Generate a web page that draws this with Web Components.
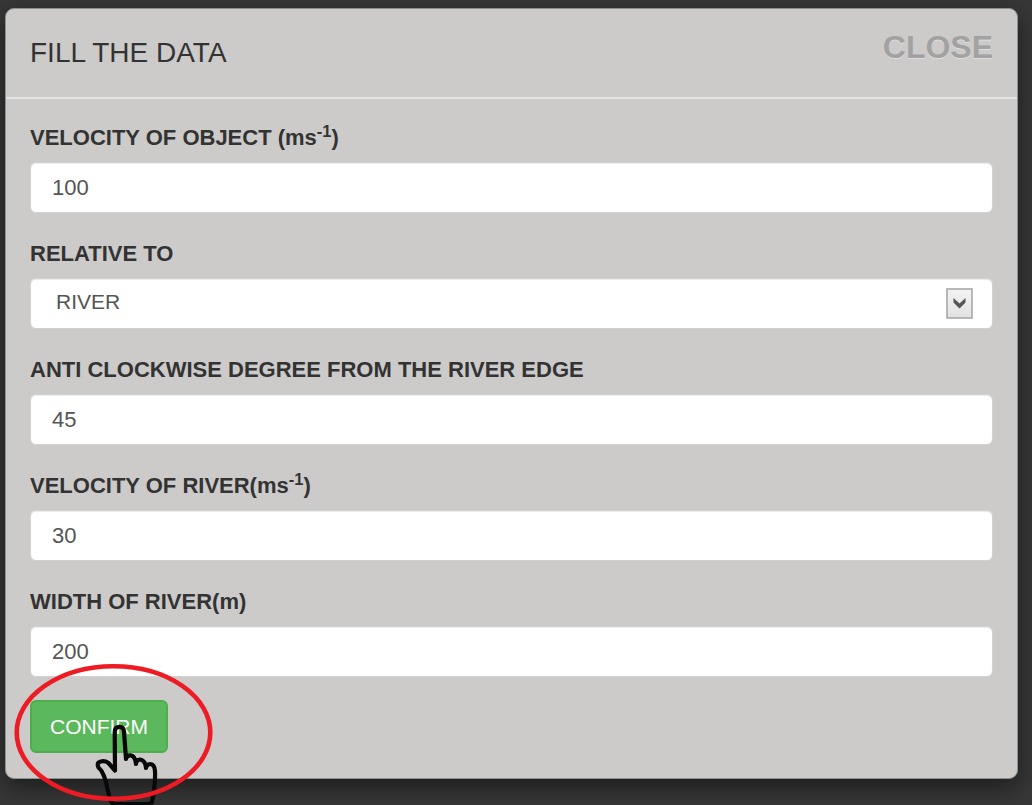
<!DOCTYPE html>
<html lang="en">
<head>
<meta charset="utf-8">
<meta name="viewport" content="width=device-width, initial-scale=1">
<title>Fill the data</title>
<style>
  body {
    margin: 0;
    min-height: 100vh;
    background: #373737;
    color: #333;
    font-family: "Liberation Sans", Arial, sans-serif;
    font-size: 22px;
    line-height: 31px;
  }
</style>
</head>
<body>
<modal-dialog>
  <span slot="title">FILL THE DATA</span>
  <text-field value="100">VELOCITY OF OBJECT (ms<sup>-1</sup>)</text-field>
  <select-field options="RIVER,GROUND">RELATIVE TO</select-field>
  <text-field value="45">ANTI CLOCKWISE DEGREE FROM THE RIVER EDGE</text-field>
  <text-field value="30">VELOCITY OF RIVER(ms<sup>-1</sup>)</text-field>
  <text-field value="200">WIDTH OF RIVER(m)</text-field>
  <click-hint><confirm-button>CONFIRM</confirm-button></click-hint>
</modal-dialog>

<script>
  const fieldStyles = `
    :host { display: block; }
    label { display: block; margin-bottom: 9px; font-weight: bold; }
    ::slotted(sup) { font-size: 75%; line-height: 0; position: relative; top: -8px; vertical-align: baseline; }
    input, select {
      display: block; box-sizing: border-box; width: 100%; height: 51px; margin: 0;
      border: 1px solid #d2d2d2; border-radius: 6px; background: #fff;
      box-shadow: inset 0 1px 1px rgba(0,0,0,.08);
      padding: 0 21px; font: inherit; color: #555; outline: none;
    }
  `;

  class ModalDialog extends HTMLElement {
    constructor() {
      super();
      this.attachShadow({ mode: 'open' }).innerHTML = `
        <style>
          :host { display: block; padding: 8px 14px 26px 5px; }
          section {
            background: #cccbca; border: 1px solid #8d9091; border-radius: 9px;
            box-shadow: 0 8px 24px rgba(0,0,0,.5);
          }
          header {
            display: flex; justify-content: space-between; align-items: flex-start;
            box-sizing: border-box; min-height: 90px; padding: 24px;
            border-bottom: 2px solid #e3e3e3;
          }
          h1 { margin: 0; font-size: 28px; line-height: 40px; font-weight: normal; }
          button {
            margin: 0; padding: 0; border: 0; background: none; cursor: pointer;
            font: bold 32px/28px "Liberation Sans", Arial, sans-serif;
            color: #a3a2a2; text-shadow: 0 1px 0 #dedede;
          }
          form { display: flex; flex-direction: column; gap: 25px; padding: 23px 24px 25px; }
        </style>
        <section role="dialog" aria-labelledby="title">
          <header>
            <h1 id="title"><slot name="title"></slot></h1>
            <button type="button">CLOSE</button>
          </header>
          <form><slot></slot></form>
        </section>`;
    }
  }

  class TextField extends HTMLElement {
    constructor() {
      super();
      this.attachShadow({ mode: 'open' }).innerHTML = `
        <style>${fieldStyles}</style>
        <label for="field"><slot></slot></label>
        <input id="field" type="text" inputmode="decimal">`;
    }
    connectedCallback() {
      this.shadowRoot.querySelector('input').value = this.getAttribute('value') || '';
    }
  }

  class SelectField extends HTMLElement {
    constructor() {
      super();
      this.attachShadow({ mode: 'open' }).innerHTML = `
        <style>${fieldStyles}
          .control { position: relative; }
          select { appearance: none; padding: 0 60px 4px 25px; font-size: 21px; }
          svg { position: absolute; right: 20px; top: 10px; pointer-events: none; }
        </style>
        <label for="field"><slot></slot></label>
        <div class="control">
          <select id="field"></select>
          <svg width="27" height="31" viewBox="0 0 27 31" aria-hidden="true">
            <defs><linearGradient id="face" x1="0" y1="0" x2="0" y2="1">
              <stop offset="0" stop-color="#f3f3f3"/><stop offset="1" stop-color="#e2e2e2"/>
            </linearGradient></defs>
            <rect x="1" y="1" width="25" height="29" fill="url(#face)" stroke="#a9a9a9" stroke-width="1.600"/>
            <path d="M7.5 10 L13.500 15.500 L19.500 10 V14.500 L13.500 20.500 L7.500 14.500 Z" fill="#555"/>
          </svg>
        </div>`;
    }
    connectedCallback() {
      const names = (this.getAttribute('options') || '').split(',');
      this.shadowRoot.querySelector('select').replaceChildren(...names.map(n => new Option(n)));
    }
  }

  class ConfirmButton extends HTMLElement {
    constructor() {
      super();
      this.attachShadow({ mode: 'open' }).innerHTML = `
        <style>
          :host { display: block; }
          button {
            display: block; height: 53px; margin: 0; padding: 0 18px;
            border: 2px solid #4cae4c; border-radius: 6px; background: #5cb85c;
            color: #fff; font: inherit; font-size: 21px; cursor: pointer;
          }
        </style>
        <button type="button"><slot></slot></button>`;
    }
  }

  /* Rings its content in red and lays a pointing hand over it. */
  class ClickHint extends HTMLElement {
    constructor() {
      super();
      this.attachShadow({ mode: 'open' }).innerHTML = `
        <style>
          :host { display: block; position: relative; width: fit-content; margin-top: -2px; }
          svg { position: absolute; left: -18px; top: -40px; pointer-events: none; }
        </style>
        <slot></slot>
        <svg width="204" height="145" viewBox="12 660 204 145" aria-hidden="true" fill="none">
          <path d="M115 770.500 L114.700 732 Q115 726.800 119.300 726.800 Q123.800 726.800 124 732 L126 759 Q126.500 755 130.500 755.300 Q135.500 756 136 764 Q136.500 759.500 140 759.500 Q145.500 760.500 146 768 Q146.500 764 150.500 764 Q154.500 764.500 155 771 C155.500 782 154 792 152 802 Q151 804 147 804 L114 804 Q111 803 110 799 C107 790 107 782 103.500 775 Q101.500 770 98.500 767.500 Q97 764.500 98.500 762.500 Q103.500 759.500 108.500 763 Z" stroke="#080808" stroke-width="4.200" stroke-linejoin="round"/>
          <ellipse cx="113.500" cy="732.500" rx="96.800" ry="66.300" stroke="#ed1c24" stroke-width="4.600"/>
        </svg>`;
    }
  }

  customElements.define('modal-dialog', ModalDialog);
  customElements.define('text-field', TextField);
  customElements.define('select-field', SelectField);
  customElements.define('confirm-button', ConfirmButton);
  customElements.define('click-hint', ClickHint);
</script>
</body>
</html>
